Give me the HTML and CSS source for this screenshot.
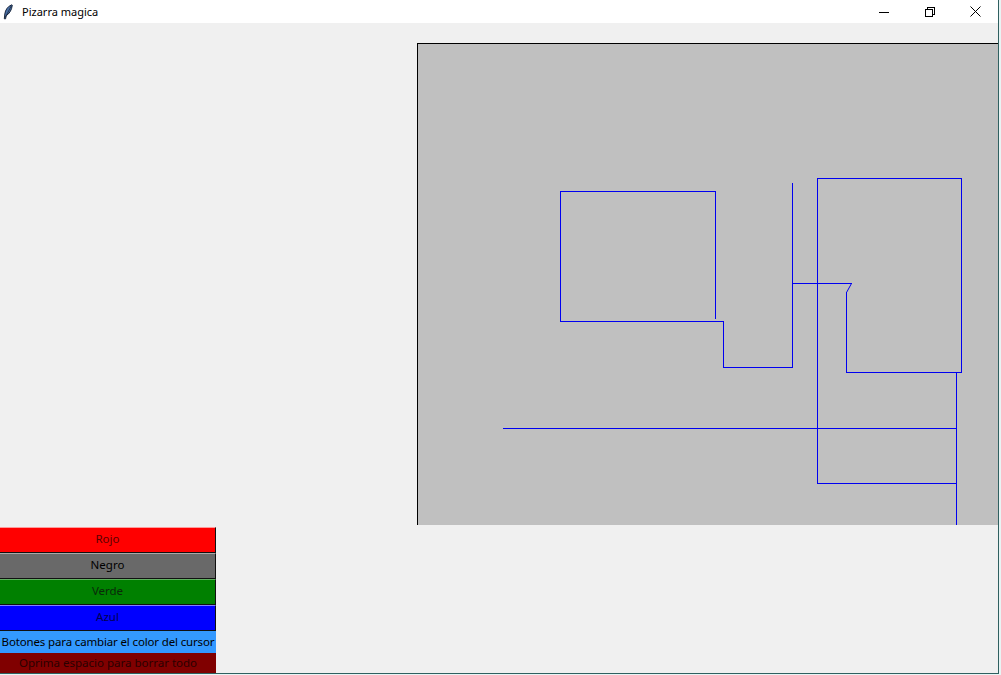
FILE: index.html
```html
<!DOCTYPE html>
<html>
<head>
<meta charset="utf-8">
<link rel="stylesheet" href="styles.css">
</head>
<body>
<div class="window">
  <div class="titlebar">
    <svg class="feather" width="10" height="16" viewBox="0 0 10 16">
      <path d="M8.8 0.8 C5 2 2.2 6 1.8 10 L1.3 14.8 L2.6 14.8 L3.2 11.6 C6.2 10 8.8 6 9.3 1.2 Z" fill="#4a6fa5" stroke="#101c30" stroke-width="0.9"/>
      <path d="M8.2 2 L2.3 13.5" stroke="#101c30" stroke-width="0.7"/>
    </svg>
    <span class="title">Pizarra magica</span>
    <div class="controls">
      <div class="ctl">
        <svg width="10" height="10" viewBox="0 0 10 10" shape-rendering="crispEdges"><rect x="0" y="5" width="10" height="1" fill="#000"/></svg>
      </div>
      <div class="ctl">
        <svg width="10" height="10" viewBox="0 0 10 10" shape-rendering="crispEdges"><rect x="0.5" y="2.5" width="7" height="7" fill="none" stroke="#000"/><path d="M2.5 2.5 V0.5 H9.5 V7.5 H7.5" fill="none" stroke="#000"/></svg>
      </div>
      <div class="ctl">
        <svg width="11" height="11" viewBox="0 0 11 11"><path d="M0.5 0.5 L10.5 10.5 M10.5 0.5 L0.5 10.5" stroke="#000" stroke-width="1"/></svg>
      </div>
    </div>
  </div>
  <div class="content">
    <div class="top">
      <div class="canvas">
        <svg width="582" height="482" viewBox="0 0 582 482">
          <g fill="#0000f0" shape-rendering="crispEdges">
            <rect x="143" y="148" width="156" height="1"/>
            <rect x="298" y="148" width="1" height="128"/>
            <rect x="143" y="148" width="1" height="131"/>
            <rect x="143" y="278" width="164" height="1"/>
            <rect x="306" y="278" width="1" height="47"/>
            <rect x="306" y="324" width="70" height="1"/>
            <rect x="375" y="140" width="1" height="185"/>
            <rect x="375" y="240" width="60" height="1"/>
            <rect x="429" y="249" width="1" height="81"/>
            <rect x="429" y="329" width="116" height="1"/>
            <rect x="544" y="135" width="1" height="195"/>
            <rect x="400" y="135" width="145" height="1"/>
            <rect x="400" y="135" width="1" height="306"/>
            <rect x="400" y="440" width="140" height="1"/>
            <rect x="539" y="329" width="1" height="153"/>
            <rect x="86" y="385" width="454" height="1"/>
          </g>
          <path d="M434.5 240.5 L429.5 249.5" stroke="#0000f0" stroke-width="1" fill="none"/>
        </svg>
      </div>
    </div>
    <div class="buttons">
      <div class="btn rojo">Rojo</div>
      <div class="btn negro">Negro</div>
      <div class="btn verde">Verde</div>
      <div class="btn azul">Azul</div>
      <div class="lbl info">Botones para cambiar el color del cursor</div>
      <div class="lbl borrar">Oprima espacio para borrar todo</div>
    </div>
  </div>
</div>
</body>
</html>
```
FILE: styles.css
```css
html, body {
  margin: 0;
  padding: 0;
  width: 1001px;
  height: 675px;
  overflow: hidden;
  background: #e8f4f4;
  font-family: "Noto Sans", "Open Sans", sans-serif;
}
.window {
  width: 998px;
  height: 673px;
  border-right: 1px solid #2f6060;
  border-bottom: 1px solid #2f6060;
  background: #f0f0f0;
  display: flex;
  flex-direction: column;
  overflow: hidden;
}
.titlebar {
  height: 23px;
  background: #ffffff;
  display: flex;
  align-items: center;
  flex-shrink: 0;
}
.feather {
  margin-left: 3px;
  margin-right: 9px;
}
.title {
  font-size: 11px;
  color: #000;
}
.controls {
  margin-left: auto;
  display: flex;
  height: 23px;
}
.ctl {
  width: 46px;
  height: 23px;
  display: flex;
  align-items: center;
  justify-content: center;
}
.ctl:last-child {
  width: 45px;
}
.content {
  flex: 1;
  display: flex;
  flex-direction: column;
}
.top {
  padding-top: 20px;
  padding-left: 417px;
  height: 482px;
}
.canvas {
  width: 581px;
  height: 481px;
  border-left: 1px solid #000;
  border-top: 1px solid #000;
  background: #c0c0c0;
  overflow: hidden;
}
.canvas svg {
  display: block;
  margin-left: -1px;
  margin-top: -1px;
}
.buttons {
  margin-top: 2px;
  width: 216px;
  display: flex;
  flex-direction: column;
}
.btn, .lbl {
  font-size: 11.5px;
  line-height: 14px;
  display: flex;
  align-items: center;
  justify-content: center;
  white-space: nowrap;
  box-sizing: border-box;
}
.btn {
  height: 26px;
  padding-bottom: 2px;
  border-top: 1px solid;
  border-bottom: 1px solid #101010;
  border-right: 1px solid #101010;
}
.rojo { background: #ff0000; border-top-color: #ff9a9a; color: #5a0000; }
.negro { background: #696969; border-top-color: #a9a9a9; color: #000; }
.verde { background: #008000; border-top-color: #60b060; color: #0a2a0a; }
.azul { background: #0000ff; border-top-color: #8080ff; color: #000050; }
.lbl {
  height: 22px;
  padding-bottom: 1px;
}
.info { background: #3399ff; color: #000; letter-spacing: -0.15px; }
.borrar { background: #800000; color: #2a0000; height: 20px; }
```
